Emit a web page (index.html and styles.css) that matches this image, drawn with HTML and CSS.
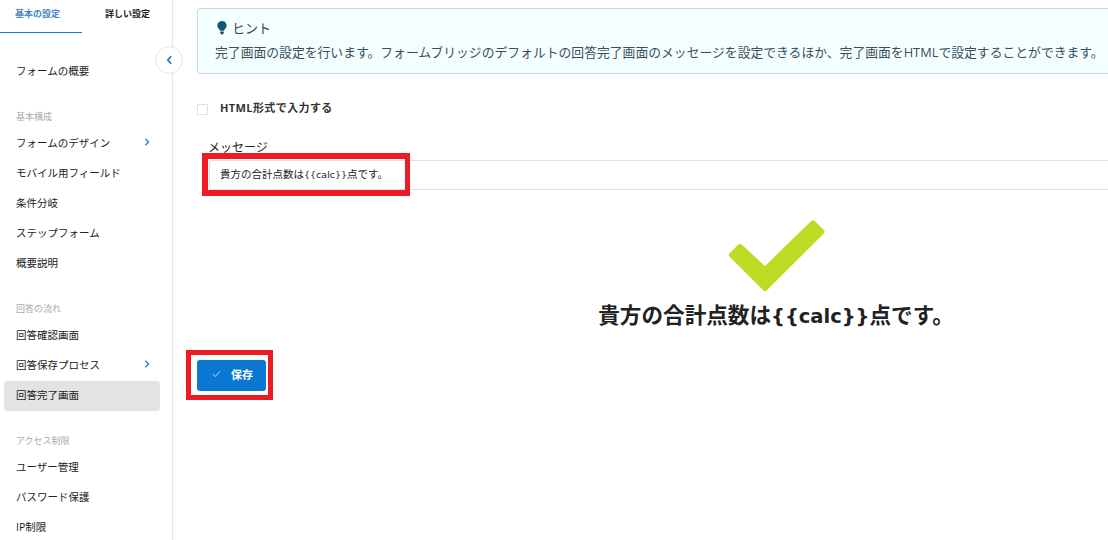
FILE: index.html
```html
<!DOCTYPE html>
<html lang="ja">
<head>
  <meta charset="UTF-8" />
  <title>回答完了画面</title>
  <link rel="stylesheet" href="styles.css">
</head>
<body>

  <!-- Sidebar -->
  <aside class="sidebar">
    <div class="tabs">
      <a class="tab active">基本の設定</a>
      <a class="tab">詳しい設定</a>
    </div>

    <nav class="nav">
      <a class="nav-item first">フォームの概要</a>

      <div class="nav-label">基本構成</div>
      <a class="nav-item">フォームのデザイン
        <svg class="chevron" viewBox="0 0 6 10"><path d="M1 1l4 4-4 4" /></svg>
      </a>
      <a class="nav-item">モバイル用フィールド</a>
      <a class="nav-item">条件分岐</a>
      <a class="nav-item">ステップフォーム</a>
      <a class="nav-item">概要説明</a>

      <div class="nav-label">回答の流れ</div>
      <a class="nav-item">回答確認画面</a>
      <a class="nav-item">回答保存プロセス
        <svg class="chevron" viewBox="0 0 6 10"><path d="M1 1l4 4-4 4" /></svg>
      </a>
      <a class="nav-item current">回答完了画面</a>

      <div class="nav-label">アクセス制限</div>
      <a class="nav-item">ユーザー管理</a>
      <a class="nav-item">パスワード保護</a>
      <a class="nav-item">IP制限</a>
    </nav>

    <button class="collapse">
      <svg viewBox="0 0 8 12"><path d="M6 1.5L2 6l4 4.5" /></svg>
    </button>
  </aside>

  <!-- Main -->
  <main class="main">
    <div class="hint">
      <div class="hint-title">
        <svg class="bulb" viewBox="0 0 10 14">
          <path d="M5 0a4.6 4.6 0 0 0-2.6 8.4c.5.4.7.9.7 1.4h3.8c0-.5.2-1 .7-1.4A4.6 4.6 0 0 0 5 0z" />
          <path d="M3.2 10.6h3.6v1.2L5.8 13.6H4.2L3.2 11.8z" />
        </svg>
        ヒント
      </div>
      <p class="hint-text">完了画面の設定を行います。フォームブリッジのデフォルトの回答完了画面のメッセージを設定できるほか、完了画面をHTMLで設定することができます。</p>
    </div>

    <label class="html-check">
      <span class="checkbox"></span>
      HTML形式で入力する
    </label>

    <div class="field">
      <div class="field-label">メッセージ</div>
      <div class="field-input">貴方の合計点数は<span class="calc">{{calc}}</span>点です。</div>
    </div>

    <div class="preview">
      <svg class="big-check" viewBox="0 0 98 72">
        <path d="M85 2.8L94 11.7 37 68.6 3.4 35 12 26.4 37 49.5z" />
      </svg>
      <div class="preview-text">貴方の合計点数は<span class="calc">{{calc}}</span>点です。</div>
    </div>

    <button class="save">
      <svg viewBox="0 0 10 8"><path d="M1 4.2l2.6 2.6L9 1" /></svg>
      保存
    </button>
  </main>

  <!-- Annotations on top of the screenshot -->
  <div class="mark mark-input"></div>
  <div class="mark mark-save"></div>

</body>
</html>
```

FILE: styles.css
```css
* {
  box-sizing: border-box;
  margin: 0;
  padding: 0;
  font-family: "Open Sans", "Noto Sans CJK JP", sans-serif;
}

body {
  background: #fff;
  display: flex;
  width: 1108px;
  height: 540px;
  overflow: hidden;
  position: relative;
  color: #222;
}

.sidebar {
  width: 173px;
  flex-shrink: 0;
  height: 540px;
  border-right: 1px solid #e6e6e6;
  position: relative;
}

.tabs {
  display: flex;
  height: 33px;
  width: 164px;
}

.tab {
  width: 82px;
  padding-top: 7px;
  padding-left: 23px;
  font-size: 9px;
  font-weight: 700;
  line-height: 13px;
  color: #222;
}

.tab.active {
  padding-left: 15px;
  color: #4a83c4;
  border-bottom: 1px solid #0f7fd6;
}

.nav {
  padding: 0 12px 0 4px;
}

.nav-item {
  display: flex;
  align-items: center;
  justify-content: space-between;
  height: 30px;
  padding: 0 10px 4px 12px;
  font-size: 10.5px;
  color: #222;
  border-radius: 3px;
}

.nav-item.first {
  margin-top: 24px;
}

.current {
  background: #e3e3e3;
}

.nav-label {
  margin-top: 23px;
  padding-left: 12px;
  height: 19px;
  font-size: 9px;
  line-height: 14px;
  color: #aaa;
}

.chevron {
  width: 6px;
  height: 8px;
  fill: none;
  stroke: #1a80d0;
  stroke-width: 1.6;
}

.collapse {
  position: absolute;
  top: 46px;
  right: -11px;
  width: 28px;
  height: 28px;
  border-radius: 50%;
  border: 1px solid #e6e6e6;
  background: #fff;
  display: flex;
  align-items: center;
  justify-content: center;
}

.collapse svg {
  width: 7px;
  height: 10px;
  fill: none;
  stroke: #0f78c8;
  stroke-width: 2;
}

.main {
  flex: 1;
  min-width: 0;
  padding: 8px 0 0 24px;
}

.hint {
  width: 930px;
  height: 66px;
  padding: 10px 17px;
  background: #f5feff;
  border: 1px solid #bfdde3;
  border-radius: 3px;
  color: #35505c;
}

.hint-title {
  display: flex;
  align-items: center;
  gap: 5px;
  margin-left: 2px;
  font-size: 13px;
  line-height: 18px;
  color: #2c4a58;
}

.bulb {
  width: 10px;
  height: 14px;
  fill: #14566b;
}

.hint-text {
  margin-top: 6px;
  font-size: 12.82px;
  line-height: 18px;
  white-space: nowrap;
}

.html-check {
  display: flex;
  align-items: center;
  margin-top: 24px;
  height: 18px;
  font-size: 11px;
  font-weight: 700;
  letter-spacing: 0.4px;
  color: #333;
}

.checkbox {
  width: 11px;
  height: 11px;
  margin-top: 4px;
  margin-right: 12px;
  border: 1px solid #dcdfe6;
  border-radius: 1px;
}

.field {
  margin-top: 23px;
  margin-left: 12px;
}

.field-label {
  margin-left: -1px;
  margin-bottom: 4px;
  font-size: 12px;
  line-height: 17px;
  color: #222;
}

.field-input {
  width: 930px;
  height: 30px;
  padding-left: 10px;
  font-size: 10.5px;
  line-height: 27px;
  border: 1px solid #e0e0e0;
  border-radius: 3px;
  color: #222;
}

.field-input .calc {
  font-family: "DejaVu Sans", sans-serif;
  font-size: 9.5px;
}

.preview {
  display: flex;
  flex-direction: column;
  align-items: center;
  margin-top: 30px;
  width: 700px;
  margin-left: 229px;
}

.big-check {
  width: 98px;
  height: 72px;
  margin-left: 1px;
  fill: #bcdc24;
  stroke: #bcdc24;
  stroke-width: 5;
  stroke-linejoin: round;
}

.preview-text {
  margin-top: 9px;
  height: 28px;
  font-size: 21.6px;
  font-weight: 700;
  line-height: 28px;
  color: #222;
  white-space: nowrap;
}

.preview-text .calc {
  font-family: "DejaVu Sans", sans-serif;
  font-size: 19.5px;
}

.save {
  display: flex;
  align-items: center;
  margin-top: 31px;
  width: 69px;
  height: 31px;
  padding: 0 0 3px 15px;
  gap: 10px;
  background: #0a78d2;
  border: none;
  border-radius: 3px;
  color: #fff;
  font-size: 11px;
  font-weight: 700;
}

.save svg {
  width: 9px;
  height: 8px;
  fill: none;
  stroke: #cfe6f8;
  stroke-width: 1;
}

.mark {
  position: absolute;
  border: 5px solid #ed1c24;
}

.mark-input {
  left: 202px;
  top: 153px;
  width: 208px;
  height: 43px;
  border-width: 6px 5px 6px 6px;
}

.mark-save {
  left: 186px;
  top: 350px;
  width: 87px;
  height: 50px;
}
```
